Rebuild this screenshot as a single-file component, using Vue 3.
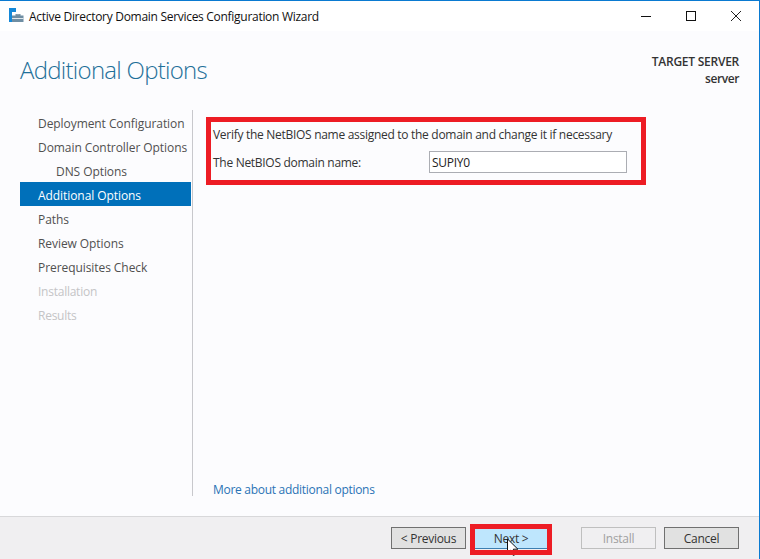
<script setup>
const steps = [
  { label: 'Deployment Configuration' },
  { label: 'Domain Controller Options' },
  { label: 'DNS Options', sub: true },
  { label: 'Additional Options', active: true },
  { label: 'Paths' },
  { label: 'Review Options' },
  { label: 'Prerequisites Check' },
  { label: 'Installation', off: true },
  { label: 'Results', off: true },
]
</script>

<template>
  <div class="window">
    <header class="titlebar">
      <svg class="appicon" width="16" height="16" viewBox="0 0 16 16">
        <rect x="0" y="0" width="7" height="4" fill="#1488d8" />
        <rect x="0" y="4" width="3" height="10" fill="#1488d8" />
        <path d="M3 7.5h3.5V6h5v1.5H14.500V14H3z" fill="#6f8ea3" />
        <path d="M7.500 7V6.800h3V7" fill="#fff" />
        <rect x="3" y="10" width="11.500" height="1" fill="#dfe7ec" />
      </svg>
      <span class="wintitle">Active Directory Domain Services Configuration Wizard</span>
      <div class="controls">
        <svg width="12" height="12" viewBox="0 0 12 12"><path d="M1 6.500h10" stroke="#111" stroke-width="1" /></svg>
        <svg width="12" height="12" viewBox="0 0 12 12"><rect x="1.500" y="1.500" width="9" height="9" fill="none" stroke="#111" /></svg>
        <svg width="12" height="12" viewBox="0 0 12 12"><path d="M1 1l10 10M11 1L1 11" stroke="#222" stroke-width="1" fill="none" /></svg>
      </div>
    </header>

    <div class="body">
      <div class="pagehead">
        <h1>Additional Options</h1>
        <div class="target">
          <div class="t1">TARGET SERVER</div>
          <div class="t2">server</div>
        </div>
      </div>

      <div class="columns">
        <nav class="steps">
          <div
            v-for="s in steps"
            :key="s.label"
            class="step"
            :class="{ sub: s.sub, active: s.active, off: s.off }"
          >{{ s.label }}</div>
        </nav>
        <main class="pane">
          <div class="form">
            <p class="verify">Verify the NetBIOS name assigned to the domain and change it if necessary</p>
            <div class="field">
              <label>The NetBIOS domain name:</label>
              <input class="input" value="SUPIY0" />
            </div>
          </div>
          <a class="more">More about additional options</a>
        </main>
      </div>
    </div>

    <footer class="footer">
      <button class="btn">&lt; Previous</button>
      <button class="btn next">Next &gt;</button>
      <button class="btn install">Install</button>
      <button class="btn">Cancel</button>
    </footer>

    <svg class="cursor" width="14" height="22" viewBox="0 0 14 22">
      <path d="M1.500 1v14l3.400-3 2.200 5.400 2.400-1-2.200-5.200h4.600z" fill="#fff" stroke="#111" stroke-width="1" />
    </svg>
    <div class="mark mark-form"></div>
    <div class="mark mark-next"></div>
  </div>
</template>

<style scoped>
.window {
  position: relative;
  width: 760px;
  height: 559px;
  box-sizing: border-box;
  display: flex;
  flex-direction: column;
  background: #fcfcfe;
  border-top: 1px solid #0a7ad1;
  border-right: 1px solid #0a7ad1;
  font-family: "Open Sans", "Noto Sans", sans-serif;
  font-size: 12px;
  letter-spacing: -0.29px;
  color: #333;
  overflow: hidden;
}
.titlebar {
  height: 30px;
  flex: none;
  background: #fff;
  display: flex;
  align-items: center;
  padding-left: 9px;
  color: #111;
}
.appicon { flex: none; }
.wintitle { margin-left: 4px; }
.controls {
  margin-left: auto;
  display: flex;
  gap: 33px;
  padding-right: 17px;
  align-items: center;
}
.body {
  flex: 1;
  min-height: 0;
  display: flex;
  flex-direction: column;
}
.pagehead {
  height: 79px;
  flex: none;
  display: flex;
  justify-content: space-between;
  padding: 0 20px;
}
h1 {
  margin: 23px 0 0;
  font-size: 24px;
  font-weight: 300;
  line-height: 32px;
  letter-spacing: -0.72px;
  color: #1f7099;
}
.target {
  margin-top: 21px;
  text-align: right;
  line-height: 17px;
  color: #333;
}
.t1 { font-weight: 600; letter-spacing: -0.25px; padding-top: 1px; }
.t2 { font-weight: 600; letter-spacing: -0.4px; }
.columns {
  flex: 1;
  min-height: 0;
  display: flex;
  padding-bottom: 20px;
}
.steps {
  width: 171px;
  margin-left: 20px;
  flex: none;
}
.step {
  height: 24px;
  line-height: 28px;
  padding-left: 18px;
  color: #505050;
  letter-spacing: -0.07px;
  white-space: nowrap;
}
.step.sub { padding-left: 36px; }
.step.active { background: #0070ba; color: #fff; }
.step.off { color: #c4c4c6; letter-spacing: -0.25px; }
.pane {
  margin-left: 1px;
  flex: 1;
  border-left: 1px solid #c8c8cc;
  padding-left: 20px;
  display: flex;
  flex-direction: column;
  justify-content: space-between;
}
.form { padding-top: 16px; }
.verify {
  margin: 0;
  line-height: 18px;
  color: #333;
}
.field {
  display: flex;
  align-items: center;
  margin-top: 7px;
}
.field label { width: 216px; flex: none; }
.input {
  width: 198px;
  height: 22px;
  box-sizing: border-box;
  border: 1px solid #abadb3;
  background: #fff;
  padding: 0 2px;
  font: inherit;
  letter-spacing: inherit;
  color: #222;
  outline: none;
}
.more {
  color: #2a73b5;
  line-height: 18px;
  margin-bottom: -3px;
}
.footer {
  height: 43px;
  flex: none;
  box-sizing: border-box;
  background: #f0eff1;
  border-top: 1px solid #d8d8da;
  display: flex;
  align-items: flex-start;
  padding: 10px 20px 0 0;
  justify-content: flex-end;
}
.btn {
  width: 75px;
  height: 22px;
  box-sizing: border-box;
  border: 1px solid #707070;
  background: #e1e1e1;
  font: inherit;
  letter-spacing: inherit;
  color: #333;
  padding: 0;
  margin-left: 8px;
}
.next {
  width: 72px;
  height: 20px;
  margin-top: 2px;
  margin-left: 9px;
  background: #bee6fd;
  border: none;
  border-bottom: 1px solid #3c7fb1;
}
.install {
  margin-left: 34px;
  background: #f0eff1;
  border-color: #bfbfbf;
  color: #a0a0a0;
}
.mark {
  position: absolute;
  box-sizing: border-box;
  border: 5px solid #ed1c24;
  pointer-events: none;
}
.mark-form { left: 206px; top: 116px; width: 440px; height: 68px; }
.mark-next { left: 470px; top: 523px; width: 82px; height: 31px; }
.cursor { position: absolute; left: 506px; top: 537px; }
</style>

<style>
html, body { margin: 0; background: #fff; }
</style>
